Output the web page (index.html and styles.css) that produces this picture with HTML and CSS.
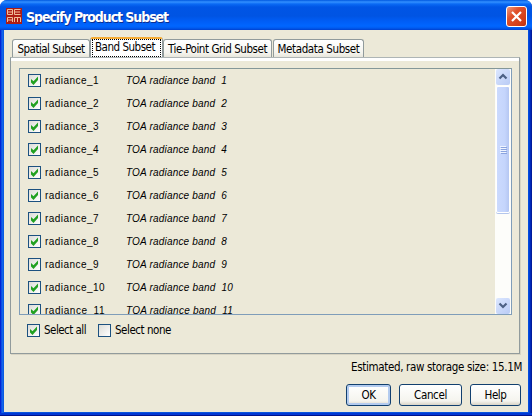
FILE: index.html
```
<!DOCTYPE html>
<html lang="en">
<head>
<meta charset="utf-8">
<title>Specify Product Subset</title>
<link rel="stylesheet" href="styles.css">
</head>
<body>
<div class="window">
  <header class="titlebar">
    <svg class="logo" width="16" height="16" viewBox="0 0 16 16" fill="none" stroke="#f0bd9a">
      <rect width="16" height="16" fill="#ae1d14" stroke="none"/>
      <path d="M1.500 1.500h5v5h-5zM1.500 4h5M14.500 1.500h-6v5h6M8.500 4h5.500M1.500 14v-4.500h5v4.500M1.500 12h5M8.500 14v-4.500h6v4.500M11.500 9.500v4.500"/>
    </svg>
    <h1 class="title"><span class="fit" data-w="142">Specify Product Subset</span></h1>
    <button class="close" aria-label="Close"><svg width="19" height="19" viewBox="0 0 19 19"><path d="M5 5l9 9M14 5l-9 9" stroke="#fff" stroke-width="2.200"/></svg></button>
  </header>
  <main class="content">
    <nav class="tabs">
      <div class="tab spatial"><span class="fit" data-w="67">Spatial Subset</span></div>
      <div class="tab active"><span class="fit" data-w="60">Band Subset</span></div>
      <div class="tab tie"><span class="fit" data-w="99">Tie-Point Grid Subset</span></div>
      <div class="tab metadata"><span class="fit" data-w="82">Metadata Subset</span></div>
    </nav>
    <section class="panel">
      <div class="list">
        <div class="rows" id="rows"></div>
        <div class="scrollbar">
          <div class="arrow"><svg width="14" height="15" viewBox="0 0 14 15"><path d="M3.500 9.500L7 6 10.500 9.500" fill="none" stroke="#4d6185" stroke-width="2.200"/></svg></div>
          <div class="thumb"><i></i><i></i><i></i><i></i></div>
          <div class="arrow down"><svg width="14" height="15" viewBox="0 0 14 15"><path d="M3.500 5.500L7 9 10.500 5.500" fill="none" stroke="#4d6185" stroke-width="2.200"/></svg></div>
        </div>
      </div>
      <div class="choices">
        <div class="choice all"><span class="check on"></span><span class="fit" data-w="42">Select all</span></div>
        <div class="choice"><span class="check"></span><span class="fit" data-w="56">Select none</span></div>
      </div>
    </section>
    <div class="size"><span class="fit" data-w="171">Estimated, raw storage size: 15.1M</span></div>
    <footer class="buttons">
      <button class="btn ok"><span class="fit" data-w="14">OK</span></button>
      <button class="btn cancel"><span class="fit" data-w="33">Cancel</span></button>
      <button class="btn help"><span class="fit" data-w="22">Help</span></button>
    </footer>
  </main>
</div>
<script src="script.js"></script>
</body>
</html>
```
FILE: styles.css
```
* { box-sizing: border-box; }
body {
  margin: 0;
  width: 532px;
  height: 416px;
  overflow: hidden;
  background: #fff;
  font: 11.5px/14px "DejaVu Sans Condensed", "DejaVu Sans", sans-serif;
  font-stretch: condensed;
  color: #000;
}
.window {
  height: 416px;
  padding: 0 4px 4px;
  border-radius: 7px 7px 0 0;
  background: linear-gradient(90deg, #0019cf 0, #0831d9 1px, #166aee 2px, #0855dd 4px, #0855dd 528px, #0046de 529px, #0030c8 530px, #00138c 532px);
  box-shadow: inset 0 -1px #00138c, inset 0 -3px #0138d4;
  overflow: hidden;
}
.titlebar {
  display: flex;
  height: 30px;
  margin: 0 -4px;
  padding: 6px 5px 0 6px;
  background: linear-gradient(#0058e0 0, #3390ff 2px, #0a6af4 4px, #0055e5 7px, #0054e3 16px, #005df5 21px, #0066ff 26px, #005bf0 28px, #0040cf 30px);
}
.logo { flex: none; margin-top: 2px; }
.title {
  flex: 1;
  margin: 2px 0 0 4px;
  font: bold 14px/18px "DejaVu Sans Condensed", "DejaVu Sans", sans-serif;
  font-stretch: condensed;
  color: #fff;
  text-shadow: 1px 1px #0b2f92;
}
.fit { display: inline-block; white-space: pre; }
.close {
  width: 21px;
  height: 21px;
  padding: 0;
  border: 1px solid #fff;
  border-radius: 3px;
  background: linear-gradient(135deg, #ef9a7d, #e0512b 35%, #d03c16 80%, #b83010);
}
.close svg { display: block; }
.content {
  height: 382px;
  padding: 7px 6px 0;
  background: #ece9d8;
}
.tabs {
  display: flex;
  align-items: flex-end;
  height: 20px;
  padding-left: 2px;
}
.tab {
  height: 18px;
  margin-right: 1px;
  padding-top: 2px;
  border: 1px solid #919b9c;
  border-bottom: 0;
  border-radius: 3px 3px 0 0;
  background: linear-gradient(#fff, #f5f4ee 75%, #e8e6db);
  text-align: center;
}
.spatial { width: 78px; margin-right: 0; }
.tie { width: 109px; }
.metadata { width: 91px; margin-right: 0; }
.active {
  width: 73px;
  height: 20px;
  margin-right: 0;
  padding: 0 1px;
  border-top: 2px solid #f5ac35;
  background: #fff;
}
.active .fit {
  display: block;
  height: 18px;
  padding: 0 0 0 2px;
  border: 1px dotted #000;
  text-align: left;
}
.panel {
  height: 297px;
  margin-right: 2px;
  padding: 7px 7px 0 8px;
  border: 1px solid #919b9c;
  border-top-color: #aeb5b5;
  background: linear-gradient(#fff 3px, transparent 3px);
  box-shadow: 1px 1px #d8d4c3;
}
.list {
  display: flex;
  height: 247px;
  margin-top: 3px;
  border: 1px solid #7f9db9;
  border-top-color: #849798;
}
.rows { flex: 1; overflow: hidden; }
.row {
  display: flex;
  align-items: center;
  height: 23px;
  padding-left: 8px;
  font: 10px/12px "Liberation Sans", sans-serif;
}
.check {
  display: flex;
  flex: none;
  width: 13px;
  height: 13px;
  border: 1px solid #1c5180;
  background: linear-gradient(135deg, #dcdcd7, #fff);
}
.name { width: 85px; padding-left: 4px; }
.desc { font-style: italic; }
.scrollbar {
  display: flex;
  flex-direction: column;
  width: 16px;
  padding: 0 1px;
  background: #fdfdfa;
}
.arrow {
  width: 14px;
  height: 16px;
  border-radius: 2px;
  background: linear-gradient(135deg, #dce7ff, #b9cbf5);
}
.arrow svg { display: block; }
.down { margin-top: auto; }
.thumb {
  display: flex;
  flex-direction: column;
  align-items: center;
  justify-content: center;
  gap: 1px;
  height: 127px;
  margin-top: 1px;
  border: 1px solid #fff;
  border-radius: 2px;
  background: linear-gradient(90deg, #cbdafe, #c5d5fc 65%, #b5c7f2);
  box-shadow: 0 1px #b4c6ec;
}
.thumb i { width: 6px; height: 1px; background: #f0f5ff; box-shadow: 1px 1px #8ba4df; }
.choices { display: flex; padding: 8px 0 0 8px; }
.choice { display: flex; align-items: center; height: 14px; }
.choice .fit { margin: -1px 0 0 4px; }
.all { width: 71px; }
.size { height: 14px; margin: 6px 0 0; text-align: right; }
.size .fit { text-align: left; }
.buttons { display: flex; justify-content: flex-end; gap: 8px; padding: 10px 1px 0 0; }
.btn {
  height: 22px;
  padding: 0 0 1px;
  border: 1px solid #12406f;
  border-radius: 3px;
  background: linear-gradient(#fff, #f5f4ee 80%, #d9d4c6);
  font: inherit;
  color: #000;
}
.ok { width: 45px; box-shadow: inset 0 0 0 2px #b3cbef; }
.cancel { width: 63px; }
.help { width: 51px; }
```
FILE: script.js
```
const rows = document.getElementById("rows");
for (let i = 1; i <= 11; i++) {
  const extra = i > 9 ? 6 : 0;
  rows.insertAdjacentHTML("beforeend",
    `<div class="row"><span class="check on"></span>
     <span class="name"><span class="fit" data-w="${54 + extra}">radiance_${i}</span></span>
     <span class="desc"><span class="fit" data-w="${101 + extra}">TOA radiance band  ${i}</span></span></div>`);
}
for (const box of document.querySelectorAll(".on")) {
  box.innerHTML = '<svg width="11" height="11" viewBox="0 0 11 11"><path d="M2 4v3.500L4.500 10 9 5V1.500L4.500 6.200z" fill="#21a121"/></svg>';
}
// Spread each label's letters over its set width.
for (const el of document.querySelectorAll(".fit")) {
  const range = document.createRange();
  range.selectNodeContents(el);
  const natural = range.getBoundingClientRect().width;
  el.style.letterSpacing = (el.dataset.w - natural) / el.textContent.length + "px";
}
```
